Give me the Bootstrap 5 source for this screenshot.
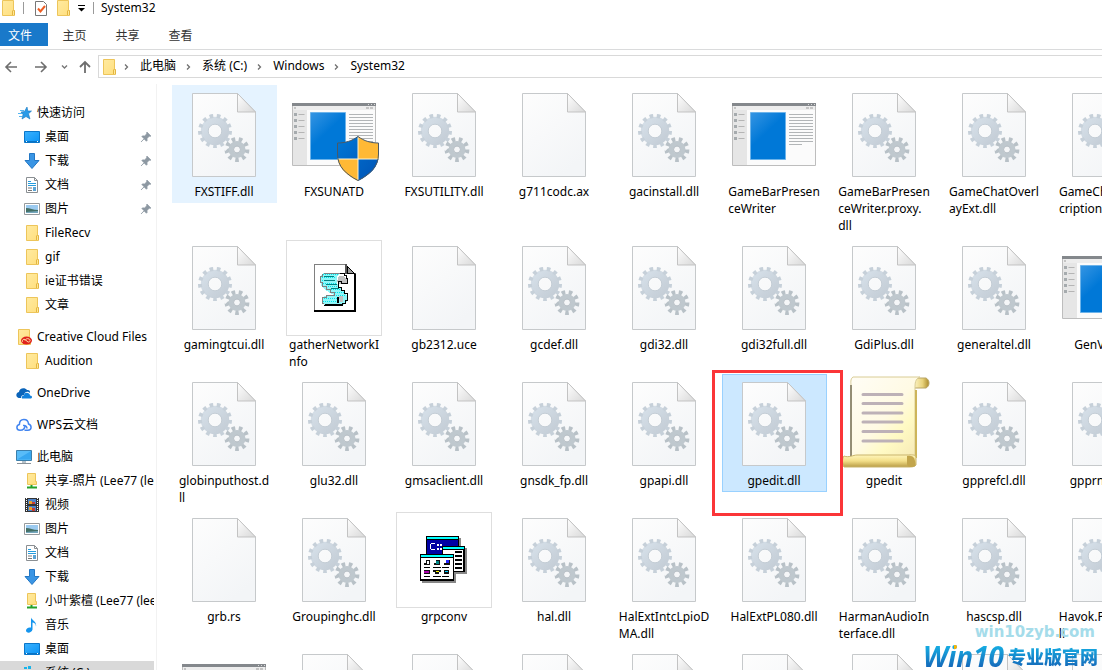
<!DOCTYPE html>
<html lang="zh-CN">
<head>
<meta charset="utf-8">
<meta name="viewport" content="width=device-width, initial-scale=1">
<title>System32</title>
<link href="https://cdn.jsdelivr.net/npm/bootstrap@5.3.0/dist/css/bootstrap.min.css" rel="stylesheet">
<style>
  body { font: 12px/17px "Noto Sans", "Noto Sans CJK SC", sans-serif; color: #000; background: #fff; }
  a { color: inherit; text-decoration: none; }
  svg { display: block; flex: none; }
  .titlebar { height: 23px; padding-bottom: 7px; }
  .titlebar .app-icon { margin-right: 7px; }
  .titlebar .check-icon { margin-left: 11px; }
  .titlebar .caret-icon { margin: 0 8px 0 7px; }
  .titlebar .window-title { padding: 0 0 2px 7px; }
  .qa-sep { width: 1px; height: 12px; background: #9a9a9a; }
  .ribbon { height: 27px; padding-bottom: 3px; border-bottom: 1px solid #dadbdc; }
  .ribbon a { color: #333; width: 53px; text-align: center; line-height: 25px; }
  .ribbon .file-tab { background: #1979ca; color: #fff; width: 48px; padding-right: 8px; }
  .address-row { padding: 5px 0 6px 4px; }
  .nav-btn { border: 0; background: none; padding: 0; }
  .crumbs { height: 23px; border: 1px solid #d9d9d9; border-right: 0; padding-left: 2px; margin-left: 6px; }
  .crumbs a { padding-bottom: 2px; }
  .crumbs .crumb-sep { margin: 0 9px; }
  .crumbs .crumb-icon { margin-right: -3px; }
  .tree { width: 157px; flex: none; padding: 17px 2px 0 0; border-right: 1px solid #f2f2f2; }
  .tree a { display: flex; align-items: center; height: 24px; gap: 5px; padding-left: 16px; white-space: nowrap; overflow: hidden; }
  .tree a span { padding-bottom: 2px; }
  .tree a.sub { padding-left: 24px; }
  .tree a.group { margin-top: 8px; }
  .tree a.current { background: #d9d9d9; }
  .tree .pin { margin-left: auto; margin-right: 2px; }
  .files { display: grid; grid-template-columns: repeat(9, 105px); gap: 1px 5px; align-items: start; align-content: start; padding: 1px 0 0 15px; }
  .file-tile { position: relative; display: block; padding: 2px 5px 3px 4px; color: #000; }
  .file-tile.hovered { background: #e5f3ff; }
  .file-tile.selected { background: #cce8ff; box-shadow: inset 0 0 0 1px #99d1ff; }
  .file-label { display: block; width: fit-content; margin: 0 auto; white-space: pre; }
  .marker { position: absolute; inset: -4px -16px -24px -10px; border: 3px solid #fb3538; z-index: 2; pointer-events: none; }
  .site-mark { position: absolute; right: 4px; bottom: 0; text-align: right; pointer-events: none; z-index: 3; }
  .site-url { font: bold 15px/20px "DejaVu Sans", sans-serif; color: #a5dcea; padding-right: 3px; }
  .site-name { gap: 4px; color: transparent; background: linear-gradient(#ffb400, #ffb400) 31px 1px / 8px 6px no-repeat, linear-gradient(#16b9ea, #1560b4); -webkit-background-clip: text; background-clip: text; }
  .site-latin { font: italic bold 28px/28px "Open Sans", sans-serif; }
  .site-cjk { font: 900 18px/28px "Noto Sans CJK SC", sans-serif; }
</style>
</head>
<body>
<svg width="0" height="0" class="position-absolute" aria-hidden="true">
  <defs>
    <linearGradient id="paper" x2="0.6" y2="1"><stop stop-color="#fdfdfd"/><stop offset="1" stop-color="#f3f5f7"/></linearGradient>
    <linearGradient id="fold" x2="1" y2="1"><stop stop-color="#fff"/><stop offset="1" stop-color="#d8d8d8"/></linearGradient>
    <linearGradient id="gearA" x2="1" y2="1"><stop stop-color="#d5dfe8"/><stop offset="1" stop-color="#c4cdd6"/></linearGradient>
    <linearGradient id="app" x2="0.7" y2="1"><stop stop-color="#3595e3"/><stop offset=".5" stop-color="#0078d7"/><stop offset="1" stop-color="#0078d7"/></linearGradient>
    <linearGradient id="blueShield" x2="1" y2="1"><stop stop-color="#0078d7"/><stop offset="1" stop-color="#0052b4"/></linearGradient>
    <linearGradient id="parch" x2="1" y2="1"><stop stop-color="#fffdf6"/><stop offset=".5" stop-color="#fffae4"/><stop offset=".7" stop-color="#fffac4"/><stop offset="1" stop-color="#f5e7b4"/></linearGradient>
    <linearGradient id="roll" x2="0" y2="1"><stop stop-color="#fff6bd"/><stop offset=".5" stop-color="#f3df89"/><stop offset="1" stop-color="#b99c45"/></linearGradient>
    <linearGradient id="rollTop" x2="1"><stop stop-color="#fff8ce"/><stop offset=".6" stop-color="#e8d27b"/><stop offset="1" stop-color="#a9892b"/></linearGradient>
    <linearGradient id="folderFill" x2="1" y2="1"><stop stop-color="#ffeaa0"/><stop offset="1" stop-color="#ffdf7e"/></linearGradient>
    <linearGradient id="screenFill" x2="1" y2="1"><stop stop-color="#3bb2ff"/><stop offset="1" stop-color="#0a93f5"/></linearGradient>
  </defs>
  <symbol id="f-blank" viewBox="0 0 96 96">
    <path d="M16.500 6.500h45l18 18.500v64.500h-63z" fill="url(#paper)" stroke="#c6c9cb"/>
    <path d="M61.500 6.500v18.500h18z" fill="url(#fold)" stroke="#c3c3c3"/>
  </symbol>
  <symbol id="f-dll" viewBox="0 0 96 96">
    <use href="#f-blank"/>
    <g fill="none" stroke="#bcc6cf">
      <circle cx="39" cy="44" r="10.500" stroke-width="7.500" stroke="url(#gearA)"/>
      <circle cx="39" cy="44" r="15" stroke-width="4" stroke="#c6d0d9" pathLength="26" stroke-dasharray="1 1"/>
      <circle cx="39" cy="44" r="6.800" stroke-width=".8"/>
      <circle cx="61" cy="62.500" r="6" stroke-width="5" stroke="#bfc8ce"/>
      <circle cx="61" cy="62.500" r="10.200" stroke-width="4.400" stroke="#b8c1c7" pathLength="18" stroke-dasharray="1 1"/>
      <circle cx="61" cy="62.500" r="3.400" stroke="#a9b3ba" stroke-width=".8"/>
    </g>
  </symbol>
  <symbol id="f-app" viewBox="0 0 96 96">
    <path d="M6.500 16.500h83v62h-83z" fill="#fbfbfb" stroke="#bdbdbd"/>
    <path d="M7 19h82v4H7z" fill="#ededed"/><path d="M7 23h14v55H7z" fill="#e6e6e6"/>
    <path d="M6 16h84v3H6z" fill="#84888c"/>
    <path d="M82 17h1v1h-1zm3 0h1v1h-1zm3 0h1v1h-1z" fill="#ddd"/><path d="M80 20h3v2h-3zm4 0h3v2h-3zM8 20h2v2H8z" fill="#c4c4c4"/>
    <path d="M24.500 25.500h35v47h-35z" fill="url(#app)" stroke="#6cb3ea"/>
    <path d="M63 27.500h24m-24 3h24m-24 3h24m-24 3h24m-24 3h24m-24 3h24m-24 3h24m-24 3h24m-24 3h24m-24 3h24m-24 3h13" stroke="#b2b5b7"/>
    <path d="M9.500 26v27" stroke="#a6abae" stroke-width="3" stroke-dasharray="3 3"/>
    <path d="M12.500 27.500h6m-6 6h6m-6 6h6m-6 6h6m-6 6h6" stroke="#b5b5b5"/>
  </symbol>
  <symbol id="f-uac" viewBox="0 0 96 96">
    <use href="#f-app"/>
    <clipPath id="shieldClip"><path d="M72 49c6 5 13 7 21 7v11c0 13-9 21-21 27-12-6-21-14-21-27V56c8 0 15-2 21-7z"/></clipPath>
    <g clip-path="url(#shieldClip)"><path d="M51 49h21v23H51zM72 72h21v23H72z" fill="url(#blueShield)"/><path d="M72 49h21v23H72zM51 72h21v23H51z" fill="#ffb935"/><path d="M72 49v46M51 72h42" stroke="#fff3d0"/></g>
    <path d="M72 49.500c6 4.500 13 6.500 20.500 6.500v11c0 13-9 20.500-20.500 26.500-11.500-6-20.500-13.500-20.500-26.500V56c7.500 0 14.500-2 20.500-6.500z" fill="none" stroke="#4a5966"/>
  </symbol>
  <symbol id="f-script" viewBox="0 0 96 96" shape-rendering="crispEdges">
    <path d="M.5.5h95v95H.5z" fill="#fff" stroke="#dedede"/>
    <path d="M29 25h30l9 9v36H29z" fill="#fff"/><path d="M28 24h32v1H29v46h-1z" fill="#808080"/>
    <path d="M28 70h42v2H28z M68 34h2v38h-2z"/><path d="M59 24h2v9h9v1H59z" fill="#555"/><path d="M61 26l7 7h-7z" fill="#999" stroke="#000"/>
    <path d="M37 33h17l-3 4v6l2 4 6 5 2 4v5l-3 4H38l-2-2v-5l3-2h10l-8-5-5-4-2-5v-5z" fill="#8ff6f8"/>
    <path d="M37 34h15M36 37h14M36 40h14M37 43h14M38 46h15M41 49h16M47 52h11M50 55h9M38 58h13M37 61h14" stroke="#00e4ea" stroke-dasharray="1 1"/>
    <path d="M38 33h16M36 34v2h-2v6h2v4h4v3h4v3h4v3h-8v2h-4v6h2" fill="none" stroke="#808080"/>
    <path d="M38 36.500h10m-10 4h11m-9 4h11m-6 4h8" stroke="#008080"/>
    <path d="M53 36h5l3 4v3h-5l-3 1-2-2z" fill="#c0c0c0"/>
    <path d="M54 33h4v2h2v3h1v5h-6v-2h-3v6h3v3h3v3h3v7h-2v3h-3v2H38" fill="none" stroke="#000"/>
    <path d="M53 56h4v6h-3z" fill="#c0c0c0"/><path d="M51 57h2v6h-2zM39 64h18v2H39z"/>
  </symbol>
  <symbol id="f-group" viewBox="0 0 96 96" shape-rendering="crispEdges">
    <path d="M.5.500h95v95H.5z" fill="#fff" stroke="#dedede"/>
    <path d="M32 26h33v10H32zM48 36h23v26H48z M26 44h34v27H26z" fill="#888"/>
    <path d="M30 24h33v24H30zM46 34h23v26H46z"/>
    <path d="M31 25h31v2H31z" fill="#0ff"/><path d="M31 28h31v16H31z" fill="#0000a4"/>
    <path d="M39 31h-4l-1 1v5l1 1h4v-1h-4v-5h4zM41 32h2v2h-2zm3 0h2v2h-2zm-3 4h2v2h-2zm3 0h2v2h-2z" fill="#fff"/>
    <path d="M46 34h23v26H46z"/><path d="M47 35h21v2H47z" fill="#0ff"/><path d="M47 38h20v21H47z" fill="#fff"/>
    <path d="M59 40h7m-7 4h7m-7 4h7m-7 4h7m-7 4h7" stroke="#000" stroke-width="2"/>
    <path d="M24 42h34v27H24z"/><path d="M25 43h32v2H25z" fill="#0ff"/><path d="M25 46h32v21H25z" fill="#fff"/>
    <path d="M30 48h4v5h-6v-2h2zm10 0h4v5h-6v-2h2zm10 0h4v5h-6v-2h2zM28 58h6v4h-6zm9 0h8v2h-8zm2 2h4v2h-4zm9-2h5v4h-5z" fill="#111"/>
    <path d="M28 55h6v1h-6zm9 0h8v1h-8zm9 0h7v1h-7zm-18 9h6v1h-6zm9 0h8v1h-8zm9 0h7v1h-7z"/>
    <path d="M31 49h2v3h-2z" fill="#fff"/><path d="M40 49h3v3h-3z" fill="#088"/><path d="M50 48h3v3h-3z" fill="#22f"/><path d="M28 59h5v2h-5z" fill="#a0a"/><path d="M40 59h3v1h-3z" fill="#ff0"/><path d="M49 59h3v1h-3z" fill="#0cf"/>
  </symbol>
  <symbol id="f-scroll" viewBox="0 0 96 96">
    <path d="M79 2h11c4 2 4 8 0 10H77z" fill="url(#rollTop)" stroke="#b9a566"/>
    <path d="M17 1h67c-5 2-5 6-5 12v68H14c2-2 1-5 1-8V10c0-3-1-7 2-9z" fill="url(#parch)" stroke="#d9cc95"/>
    <path d="M15 9v71" stroke="#77705a" stroke-width="1.500"/><path d="M80 14v68" stroke="#cdb55a" stroke-width="2"/>
    <path d="M8 80c5 2 9-1 13-1h50c4 0 8-1 9 2v8c-1 2-5 2-8 2H8c-2-2-2-9 0-11z" fill="url(#roll)" stroke="#c9b46c"/>
    <path d="M71 80c6-1 9 2 8 10-4 2-8 1-8-2z" fill="#c2a54c"/>
    <path d="M27 18.500h39M27 27.500h39M27 37h39M27 46h39M27 55.500h39M27 65h39" stroke="#bdb1b7" stroke-width="3" stroke-linecap="round"/>
  </symbol>
  <symbol id="i-folder" viewBox="0 0 16 16"><path d="M2.500.5h11v10h1v5h-12z" fill="url(#folderFill)" stroke="#edc55a"/><path d="M12.500 15v-4l1-1 1 1v4" fill="#ffe896" stroke="#e3b541"/></symbol>
  <symbol id="i-cc" viewBox="0 0 16 16"><use href="#i-folder"/><ellipse cx="10.500" cy="11.500" rx="5.500" ry="4" fill="#e0221c"/><path d="M7 13c-1.500-1 0-3.500 2-2.500l3 2.500c2 .5 3-2 1-3s-3 0-4 1.500" fill="none" stroke="#ffd9a0"/></symbol>
  <symbol id="i-star" viewBox="0 0 16 16"><path d="M11 2l.8 4H15.500l-3 2.800L14 14l-4-2.500L6 14l1-4.500L5 7l3.500-.5z" fill="#2a9be8" stroke="#1877c0" stroke-width=".6"/><path d="M4 5.500h4M2 8.500h4M3 11.500h3" stroke="#55b5f0"/></symbol>
  <symbol id="i-desk" viewBox="0 0 16 16"><path d="M.5 2.500h15v11H.5z" fill="url(#screenFill)" stroke="#0b76c9"/><path d="M1 12.500h14" stroke="#0873c4"/><path d="M2 12.500h1m10 0h1" stroke="#fff"/></symbol>
  <symbol id="i-down" viewBox="0 0 16 16"><path d="M5.500.5h5v7h4.500L8 15.500 1 7.500h4.500z" fill="#3a95e4" stroke="#2377c4"/></symbol>
  <symbol id="i-doc" viewBox="0 0 16 16"><path d="M2.500.5h8l3 3v12h-11z" fill="#fff" stroke="#8a8f93"/><path d="M10.500.5v3h3" fill="none" stroke="#8a8f93"/><path d="M4 6.500h8M4 4.500h3M4 8.500h8" stroke="#269cdc"/><path d="M4 11h4m-4 2.500h4" stroke="#777"/><path d="M9 10h3v4H9z" fill="#5ba4d5"/></symbol>
  <symbol id="i-pic" viewBox="0 0 16 16"><path d="M.5 2.500h15v11H.5z" fill="#fff" stroke="#969a9d"/><path d="M2 4h12v8H2z" fill="#9bcaf0"/><path d="M2 7c4 0 7 2 12 2v3H2z" fill="#436f65"/><path d="M2 11l12-1v2H2z" fill="#75a7bd"/></symbol>
  <symbol id="i-pin" viewBox="0 0 12 12"><path d="M7 1l4 4-1 .6-.7-.3L7 7.500l.2 2-.8.8-2.300-2.300L1 11l3-3.200-2.200-2.200.8-.8 2 .2L6.700 2.700 6.400 2z" fill="#8d98a2" stroke="#8d98a2" stroke-width=".6"/></symbol>
  <symbol id="i-cloud" viewBox="0 0 16 16"><path d="M1 12c-2-3 1-5 2-5 0-4 6-5 8-2 3 0 3 1 3 3-3-3-6 0-6 2-2 0-3 1-3 3-2 0-3 0-4-1z" fill="#0a64ba"/><path d="M6 13.500c-1-2 1-3 2-3 0-4 6-3 6 0 3 0 2 3 1 3z" fill="#1180dc"/></symbol>
  <symbol id="i-wps" viewBox="0 0 16 16"><path d="M4 13.200c-4 0-4-5-.6-5.700C3.400 1 12 1 12.500 7c3.500 1 3.500 6.200-.5 6.200H8.500M4 13.200c3.500 0 5-2 5-5M7 8.500c3-.5 4 1.500 4 3" fill="none" stroke="#4285f0" stroke-width="1.500"/></symbol>
  <symbol id="i-pc" viewBox="0 0 16 16"><path d="M.5 1.500h15v10H.5z" fill="#58bcf8" stroke="#3c7fab"/><path d="M1 10.500 15 2v8.500z" fill="#37a7f0"/><path d="M1 14.500h14" stroke="#8a9299"/><path d="M6 13h4" stroke="#b6c2ca" stroke-width="2"/></symbol>
  <symbol id="i-net" viewBox="0 0 16 16"><path d="M3.500.5h8v8h1v3h-9z" fill="url(#folderFill)" stroke="#edc55a"/><path d="M7.500 12v2" stroke="#27a22a" stroke-width="2"/><path d="M3 14.500h10" stroke="#27a22a" stroke-width="2"/></symbol>
  <symbol id="i-film" viewBox="0 0 16 16"><path d="M1 1h14v14H1z" fill="#333"/><path d="M2.500 1v14m11-14v14" stroke="#fff" stroke-dasharray="1 1"/><path d="M4 2h8v5H4zM4 9h8v5H4z" fill="#4d82c7"/><path d="M5 4h3v3H5zM5 10h3v3H5z" fill="#e8a12c"/><path d="M8 5h3v2H8zM8 11h3v3H8z" fill="#c43d32"/></symbol>
  <symbol id="i-note" viewBox="0 0 16 16"><path d="M7 .5c1 3 6 4 5 9 0-3-2-4-3.500-4v7c-1 4-6.500 4-6.500 1 0-2 2-3.500 5-3V.5z" fill="#1595ee"/></symbol>
  <symbol id="i-drive" viewBox="0 0 16 16"><path d="M0 2h3v2H0zM4 1h3v3H4z" fill="#18b4ea"/><path d="M0 6h15v6H0z" fill="#999"/></symbol>
  <symbol id="i-sep" viewBox="0 0 8 8"><path d="M2 1.500 4.500 4 2 6.500" fill="none" stroke="#707070" stroke-width="1.300"/></symbol>
</svg>

<div class="vh-100 d-flex flex-column overflow-hidden position-relative">
  <header>
    <div class="titlebar d-flex align-items-center">
      <svg width="16" height="16" class="app-icon"><use href="#i-folder"/></svg>
      <span class="qa-sep"></span>
      <svg width="12" height="15" viewBox="0 0 12 15" class="check-icon"><path d="M.5.5h8l3 3v11H.5z" fill="#fff" stroke="#777"/><path d="M3 7.500l2.500 3L10 5" fill="none" stroke="#ed5d22" stroke-width="2"/></svg>
      <svg width="16" height="16" class="ms-2"><use href="#i-folder"/></svg>
      <svg width="7" height="7" viewBox="0 0 7 7" class="caret-icon"><path d="M0 .5h7" stroke="#000"/><path d="M0 3h7L3.500 6.500z"/></svg>
      <span class="qa-sep"></span>
      <span class="window-title">System32</span>
    </div>
    <nav class="ribbon d-flex">
      <a href="#" class="file-tab">文件</a><a href="#">主页</a><a href="#">共享</a><a href="#">查看</a>
    </nav>
  </header>
  <div class="address-row d-flex align-items-center">
    <button class="nav-btn" aria-label="后退"><svg width="14" height="14" viewBox="0 0 14 14"><path d="M13 7H2m5-5L2 7l5 5" fill="none" stroke="#6e6e6e" stroke-width="1.600"/></svg></button>
    <button class="nav-btn ms-3" aria-label="前进"><svg width="14" height="14" viewBox="0 0 14 14"><path d="M1 7h11M7 2l5 5-5 5" fill="none" stroke="#6e6e6e" stroke-width="1.600"/></svg></button>
    <button class="nav-btn ms-2" aria-label="最近"><svg width="16" height="8" viewBox="0 0 16 8"><path d="M6 2.500l2.500 2.500L11 2.500" fill="none" stroke="#777" stroke-width="1.400"/></svg></button>
    <button class="nav-btn ms-1" aria-label="向上"><svg width="16" height="14" viewBox="0 0 16 14"><path d="M9 13V2M4 7l5-5 5 5" fill="none" stroke="#6e6e6e" stroke-width="1.800"/></svg></button>
    <nav class="crumbs d-flex align-items-center flex-grow-1" aria-label="路径">
      <svg width="16" height="16" class="crumb-icon"><use href="#i-folder"/></svg>
      <svg width="8" height="8" class="crumb-sep"><use href="#i-sep"/></svg><a href="#">此电脑</a>
      <svg width="8" height="8" class="crumb-sep"><use href="#i-sep"/></svg><a href="#">系统 (C:)</a>
      <svg width="8" height="8" class="crumb-sep"><use href="#i-sep"/></svg><a href="#">Windows</a>
      <svg width="8" height="8" class="crumb-sep"><use href="#i-sep"/></svg><a href="#">System32</a>
    </nav>
  </div>
  <div class="d-flex flex-grow-1 overflow-hidden">
    <nav class="tree overflow-hidden" id="tree" aria-label="导航窗格"></nav>
    <main class="files flex-grow-1 overflow-hidden" id="files"></main>
  </div>
  <div class="site-mark">
    <div class="site-url">win10zyb.com</div>
    <div class="site-name d-flex align-items-center justify-content-end"><span class="site-latin">Win10</span><span class="site-cjk">专业版官网</span></div>
  </div>
</div>
<script src="https://cdn.jsdelivr.net/npm/bootstrap@5.3.0/dist/js/bootstrap.bundle.min.js"></script>
<script>
  // icon, label, classes, pinned
  const tree = [
    ['star', '快速访问', ''], ['desk', '桌面', 'sub', 1], ['down', '下载', 'sub', 1], ['doc', '文档', 'sub', 1],
    ['pic', '图片', 'sub', 1], ['folder', 'FileRecv', 'sub'], ['folder', 'gif', 'sub'], ['folder', 'ie证书错误', 'sub'],
    ['folder', '文章', 'sub'], ['cc', 'Creative Cloud Files', 'group'], ['folder', 'Audition', 'sub'],
    ['cloud', 'OneDrive', 'group'], ['wps', 'WPS云文档', 'group'], ['pc', '此电脑', 'group'],
    ['net', '共享-照片 (Lee77 (lee77))', 'sub'], ['film', '视频', 'sub'], ['pic', '图片', 'sub'], ['doc', '文档', 'sub'],
    ['down', '下载', 'sub'], ['net', '小叶紫檀 (Lee77 (lee77))', 'sub'], ['note', '音乐', 'sub'], ['desk', '桌面', 'sub'],
    ['drive', '系统 (C:)', 'sub current']
  ];
  document.getElementById('tree').innerHTML = tree.map(([icon, text, cls, pinned]) =>
    `<a href="#" class="${cls}"><svg width="16" height="16"><use href="#i-${icon}"/></svg><span>${text}</span>${pinned ? '<svg class="pin" width="12" height="12"><use href="#i-pin"/></svg>' : ''}</a>`).join('');

  const files = [
    ['dll', 'FXSTIFF.dll', 'hovered'], ['uac', 'FXSUNATD'], ['dll', 'FXSUTILITY.dll'], ['blank', 'g711codc.ax'], ['dll', 'gacinstall.dll'],
    ['app', 'GameBarPresen\nceWriter'], ['dll', 'GameBarPresen\nceWriter.proxy.\ndll'], ['dll', 'GameChatOverl\nayExt.dll'], ['dll', 'GameChatTrans\ncription.dll'],
    ['dll', 'gamingtcui.dll'], ['script', 'gatherNetworkI\nnfo'], ['blank', 'gb2312.uce'], ['dll', 'gcdef.dll'], ['dll', 'gdi32.dll'],
    ['dll', 'gdi32full.dll'], ['dll', 'GdiPlus.dll'], ['dll', 'generaltel.dll'], ['app', 'GenValObj'],
    ['dll', 'globinputhost.d\nll'], ['dll', 'glu32.dll'], ['dll', 'gmsaclient.dll'], ['dll', 'gnsdk_fp.dll'], ['dll', 'gpapi.dll'],
    ['dll', 'gpedit.dll', 'selected'], ['scroll', 'gpedit'], ['dll', 'gpprefcl.dll'], ['dll', 'gpprnext.dll'],
    ['blank', 'grb.rs'], ['dll', 'Groupinghc.dll'], ['group', 'grpconv'], ['dll', 'hal.dll'], ['dll', 'HalExtIntcLpioD\nMA.dll'],
    ['dll', 'HalExtPL080.dll'], ['dll', 'HarmanAudioIn\nterface.dll'], ['dll', 'hascsp.dll'], ['dll', 'Havok.Physics.d\nll'],
    ['app', ''], ['dll', ''], ['dll', ''], ['dll', ''], ['dll', ''], ['dll', ''], ['dll', ''], ['dll', ''], ['dll', '']
  ];
  document.getElementById('files').innerHTML = files.map(([icon, text, cls = '']) =>
    `<a href="#" class="file-tile ${cls}"><svg width="96" height="96"><use href="#f-${icon}"/></svg><span class="file-label">${text}</span>${cls === 'selected' ? '<span class="marker"></span>' : ''}</a>`).join('');
</script>
</body>
</html>
